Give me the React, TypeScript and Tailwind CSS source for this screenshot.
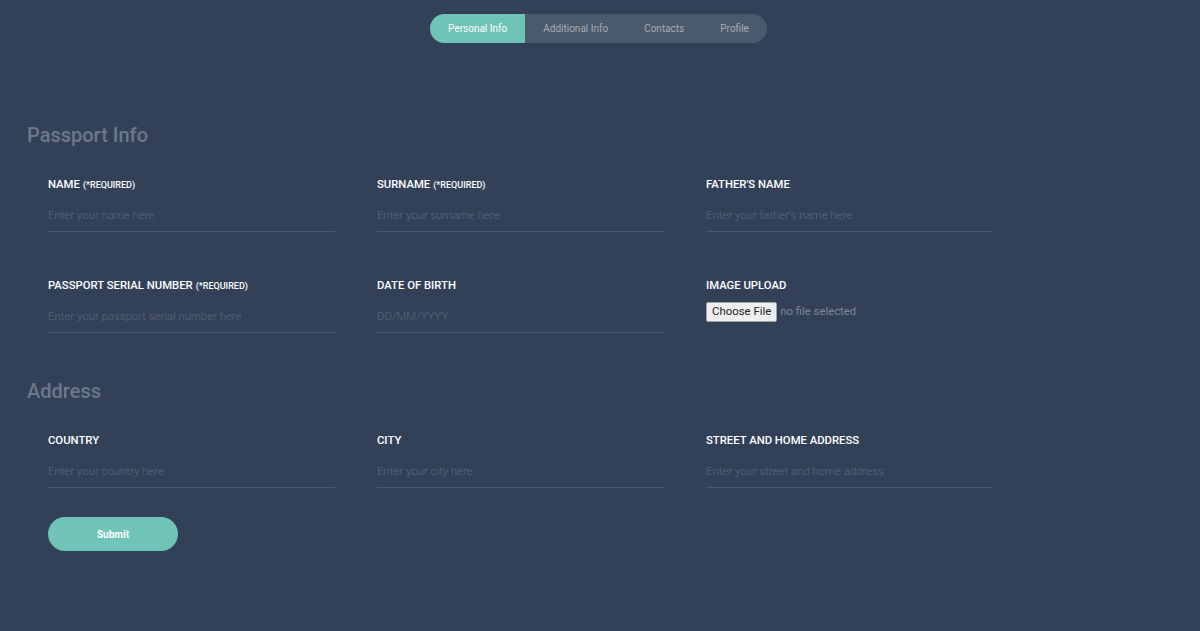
import React from "react";

const font = { fontFamily: "Roboto, 'Noto Sans', sans-serif" };

function Field({ label, req, placeholder }: { label: string; req?: boolean; placeholder: string }) {
  return (
    <div className="w-[287px]">
      <div className="text-[11.3px] leading-[14px] pt-px font-medium text-white">
        {label}
        {req && <span className="text-[9px] ml-[3px]">(*REQUIRED)</span>}
      </div>
      <input
        className="mt-[8px] block w-full h-[32px] pb-[2px] bg-transparent border-b border-[#4a596d] text-[11.4px] font-light text-white placeholder:text-[#5a697d] outline-none"
        placeholder={placeholder}
        style={font}
      />
    </div>
  );
}

export default function App() {
  const tabs = ["Personal Info", "Additional Info", "Contacts", "Profile"];
  return (
    <div className="w-[1200px] h-[631px] bg-[#334158] overflow-hidden" style={font}>
      <div className="flex justify-center pt-[14px] pr-[3px]">
        <div className="flex h-[29px] rounded-full bg-[#4b596c] overflow-hidden">
          {tabs.map((t, i) => (
            <div
              key={t}
              className={
                "px-[18px] flex items-center text-[10px] " +
                (i === 0 ? "bg-[#6fc5b5] text-white" : "text-[#a3adba]")
              }
            >
              {t}
            </div>
          ))}
        </div>
      </div>

      <div className="pl-[27px] pt-[80px]">
        <h2 className="text-[20px] leading-[24px] font-medium text-[#6b798b]">Passport Info</h2>
        <div className="pl-[21px] mt-[30px] grid grid-cols-[329px_329px_329px] gap-y-[46px]">
          <Field label="NAME" req placeholder="Enter your name here" />
          <Field label="SURNAME" req placeholder="Enter your surname here" />
          <Field label="FATHER'S NAME" placeholder="Enter your father's name here" />
          <Field label="PASSPORT SERIAL NUMBER" req placeholder="Enter your passport serial number here" />
          <Field label="DATE OF BIRTH" placeholder="DD/MM/YYYY" />
          <div className="w-[287px]">
            <div className="text-[11.3px] leading-[14px] pt-px font-medium text-white">IMAGE UPLOAD</div>
            <div className="mt-[9px] flex items-center">
              <button
                className="h-[20px] px-[5px] bg-[#efefef] border border-[#a0a0a0] rounded-[2px] text-[11.4px] text-[#222]"
                style={font}
              >
                Choose File
              </button>
              <span className="ml-[3px] text-[11.3px] text-[#7d8898]">no file selected</span>
            </div>
          </div>
        </div>

        <h2 className="mt-[46px] text-[20px] leading-[24px] font-medium text-[#6b798b]">Address</h2>
        <div className="pl-[21px] mt-[30px] grid grid-cols-[329px_329px_329px]">
          <Field label="COUNTRY" placeholder="Enter your country here" />
          <Field label="CITY" placeholder="Enter your city here" />
          <Field label="STREET AND HOME ADDRESS" placeholder="Enter your street and home address" />
        </div>
        <div className="pl-[21px] mt-[29px]">
          <button className="w-[130px] h-[34px] rounded-full bg-[#6fc3b7] text-white text-[10px] font-bold" style={font}>
            Submit
          </button>
        </div>
      </div>
    </div>
  );
}
